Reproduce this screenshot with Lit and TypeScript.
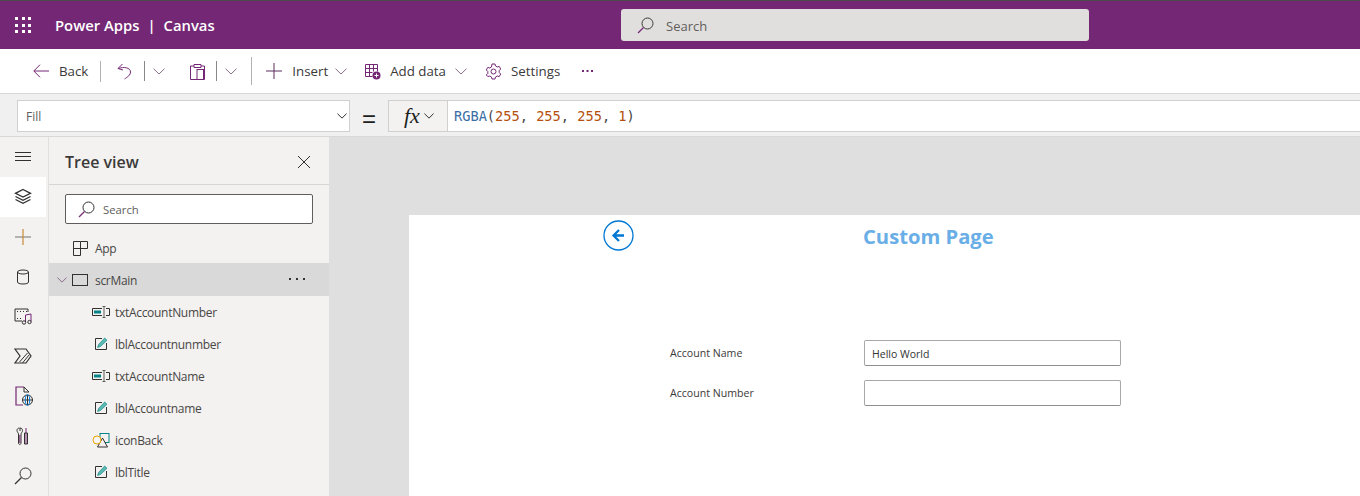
import { LitElement, html, css, svg } from "lit";
import { customElement } from "lit/decorators.js";

const P = "#742774";
const INK = "#323130";
const TEAL = "#038387";

const chevron = (cls = "") => html`<svg class="chev ${cls}" viewBox="0 0 12 7" preserveAspectRatio="none"><path d="M.5.7 6 6 11.500.7" fill="none" stroke="currentColor" vector-effect="non-scaling-stroke"/></svg>`;
const lens = (c = INK) => html`<svg width="17" height="17" viewBox="0 0 17 17" fill="none"><circle cx="10.500" cy="6.500" r="5.500" stroke=${c}/><path d="M6.500 10.500 1 16" stroke=${P} stroke-width="1.200"/></svg>`;
const dots = (cls: string, fill: string, w: number) => html`<svg class=${cls} width=${w} height="2" viewBox="0 0 ${w} 2" fill=${fill}><rect width="2" height="2"/><rect x=${(w - 2) / 2} width="2" height="2"/><rect x=${w - 2} width="2" height="2"/></svg>`;

const railIcons = [
  svg`<path d="M11 3.500l7.500 3.800-7.500 3.800-7.500-3.800z M3.500 10.500l7.500 3.800 7.500-3.800 M3.500 13.500l7.500 3.800 7.500-3.800" fill="none" stroke="${INK}" stroke-width="1.300"/>`,
  svg`<path d="M3 11h16" stroke="#8a8886" stroke-width="1.200"/><path d="M11 3v16" stroke="#c98a3a" stroke-width="1.200"/>`,
  svg`<ellipse cx="11" cy="6" rx="5.500" ry="2" fill="none" stroke="${INK}"/><path d="M5.500 6v10c0 1.300 2.500 2 5.500 2s5.500-.7 5.500-2V6" fill="none" stroke="${INK}"/>`,
  svg`<path d="M16 6V3H3v12h7" fill="none" stroke="${INK}"/><path d="M5 5.500h1M8 5.500h1M11 5.500h1M14 5.500h1M5 12.500h1M8 12.500h1" stroke="${INK}"/><path d="M13.500 16V9l5.500-1v7.500" fill="none" stroke="${P}"/><circle cx="12" cy="16.500" r="1.700" fill="none" stroke="${INK}"/><circle cx="17.500" cy="16" r="1.700" fill="none" stroke="${INK}"/>`,
  svg`<path d="M3 4h11l5 7-5 7H3l5-7z" fill="none" stroke="${INK}" stroke-width="1.200"/><path d="M7.500 17l8-9M10.500 18l6.500-8" stroke="${INK}"/>`,
  svg`<path d="M12 2H4v18h7" fill="none" stroke="${P}" stroke-width="1.200"/><path d="M12 2l5 5h-5z" fill="none" stroke="${INK}"/><circle cx="15.500" cy="15" r="5" fill="none" stroke="${INK}"/><path d="M10.500 15h10M15.500 10v10" stroke="${INK}"/><ellipse cx="15.500" cy="15" rx="2.200" ry="5" fill="none" stroke="#0078d4"/>`,
  svg`<path d="M7.500 3C6 3 5 4 5 5.500S6.500 8 6.500 9v9c0 .8.500 1.500 1.300 1.500S9 18.800 9 18V9c0-1 1.500-2 1.500-3.500S9.500 3 8 3v3" fill="none" stroke="${INK}"/><path d="M7.800 10v8" stroke="${P}"/><path d="M14 3v16" stroke="${P}"/><path d="M12.500 8h3v11h-3z" fill="none" stroke="${INK}"/>`,
  svg`<circle cx="13.500" cy="8.500" r="5.500" fill="none" stroke="${INK}"/><path d="M9.500 12.500 3 19" stroke="${INK}" stroke-width="1.200"/>`,
];

const labelIcon = html`<svg width="14" height="14" viewBox="0 0 14 14" fill="none"><path d="M8 1.500H1.500v11h11V6" stroke=${INK}/><path d="M3.500 10.500l1-3L10.700 1l2.300 2.300L6.500 9.500z" fill="#5fb8b0" stroke=${TEAL} stroke-width=".6"/></svg>`;
const inputIcon = html`<svg width="18" height="12" viewBox="0 0 18 12" fill="none"><path d="M10 2.500H.5v7H10M14 2.500h3.500v7H14" stroke=${INK}/><rect x="2" y="4.500" width="7" height="3" fill=${TEAL}/><path d="M10.500.5h3M12 .5v11M10.500 11.500h3" stroke="#605e5c"/></svg>`;
const shapeIcon = html`<svg width="18" height="15" viewBox="0 0 18 15" fill="none"><rect x="8" y=".5" width="9" height="9" stroke=${TEAL}/><path d="M10.500 5 5.500 14h10z" fill="#f3f2f1" stroke=${INK}/><circle cx="5" cy="7" r="4" fill="#f8f6f2" stroke="#eaa300"/></svg>`;

@customElement("app-root")
export class AppRoot extends LitElement {
  static styles = css`
    :host { display: block; width: 1360px; height: 496px; overflow: hidden; font-family: "Open Sans", "Noto Sans", sans-serif; color: #323130; font-size: 13.3px; }
    * { box-sizing: border-box; }
    svg { display: block; flex: none; }
    .header { height: 49px; background: #742774; border-top: 1px solid #4a4a4a; display: grid; grid-template-columns: 621px 468px; align-items: center; }
    .brand { display: flex; align-items: center; color: #fff; font-weight: 600; font-size: 14.8px; padding-left: 15px; }
    .waffle { display: grid; grid-template-columns: repeat(3, 3px); gap: 3.5px; margin-right: 24px; }
    .waffle i { width: 3px; height: 3px; background: #fff; }
    .brand b { font-weight: 600; margin: 0 8px; }
    .global-search { height: 32px; background: #e1dfdd; border-radius: 3px; display: flex; align-items: center; gap: 12px; padding: 1px 0 0 16px; color: #605e5c; font-size: 13px; }

    .toolbar { height: 45px; background: #fff; border-bottom: 1px solid #d8d8d8; display: flex; align-items: center; padding-left: 33px; }
    .tool { display: flex; align-items: center; color: #3b3a39; }
    .back { gap: 10px; }
    .insert { gap: 10px; margin-left: 14px; }
    .add { gap: 9px; margin-left: 17px; }
    .settings { gap: 9px; margin-left: 18px; }
    .chev { width: 12px; height: 7px; color: #8a6f8a; }
    .chev.dark { width: 10px; height: 6px; color: #323130; }
    .chev.small { width: 10px; height: 6px; }
    .sep { width: 1px; background: #8a8886; height: 20px; }
    .sep.light { background: #b3b0ad; height: 21px; margin: 0 16px 0 12px; }
    .sep.after-undo { margin: 0 8px 0 12px; }
    .sep.after-paste { margin: 0 8px 0 11px; }
    .sep.tall { background: #b3b0ad; height: 28px; margin-left: 14px; }
    .paste { margin-left: 25px; }
    .chev.insert-chev { margin-left: 7px; }
    .chev.add-chev { margin-left: 9px; }
    .more-tools { margin-left: 22px; }

    .formula { height: 43px; background: #f0f0f0; display: flex; align-items: center; padding: 2px 0 0 17px; border-bottom: 1px solid #d8d8d8; }
    .prop { width: 333px; height: 32px; background: #fff; border: 1px solid #d2d0ce; display: flex; align-items: center; justify-content: space-between; padding: 0 2px 0 8px; color: #605e5c; font-size: 12px; }
    .eq { width: 38px; text-align: center; font-size: 24px; line-height: 24px; color: #201f1e; padding-top: 5px; font-family: "Liberation Sans", sans-serif; }
    .fx { width: 60px; height: 32px; border: 1px solid #d2d0ce; background: #f3f2f1; display: flex; align-items: center; gap: 4px; padding-left: 15px; }
    .fx em { font-family: "Liberation Serif", serif; font-size: 22px; line-height: 24px; color: #201f1e; }
    .code { flex: 1; height: 32px; background: #fff; border: 1px solid #d2d0ce; border-left: none; border-right: none; display: flex; align-items: center; padding-left: 6px; font-family: "DejaVu Sans Mono", monospace; font-size: 13.65px; white-space: pre; color: #444; }
    .code .f { color: #3a6ea5; }
    .code .n { color: #b4500f; }

    .main { height: 359px; display: flex; }
    .rail { width: 49px; background: #f3f2f1; border-right: 1px solid #e1dfdd; display: flex; flex-direction: column; }
    .rail div { height: 40px; display: flex; align-items: center; justify-content: center; padding-right: 2px; }
    .rail .on { background: #fff; margin-right: 2px; padding-right: 0; }
    .panel { width: 280px; background: #f3f2f1; flex: none; }
    .panel-head { height: 48px; border-bottom: 1px solid #d8d6d4; display: flex; align-items: center; justify-content: space-between; padding: 2px 18px 0 16px; font-size: 16px; font-weight: 600; color: #3b3a39; }
    .tree-search { margin: 9px 16px 0; height: 30px; background: #fff; border: 1px solid #605e5c; border-radius: 2px; display: flex; align-items: center; gap: 8px; padding-left: 12px; font-size: 11.3px; color: #605e5c; }
    .rows { padding-top: 6px; }
    .row { height: 32px; display: flex; align-items: center; font-size: 12px; letter-spacing: -.3px; color: #484644; }
    .row .ic { width: 20px; display: flex; justify-content: center; margin-right: 4px; }
    .row.app { padding: 4px 0 0 21px; height: 33px; }
    .row.app .ic { margin-right: 5px; }
    .row.screen { background: #d9d9d9; padding: 1px 0 0 8px; height: 33px; }
    .row.screen .ic { margin: 0 5px 0 3px; }
    .row.child { padding-left: 42px; }
    .more { margin: 0 24px 3px auto; }

    .stage { flex: 1; background: #dfdfdf; padding: 78px 0 0 80px; }
    .page { height: 100%; background: #fff; display: grid; grid-template-columns: 194px 257px; grid-template-rows: 125px 26px 14px 26px; align-content: start; padding-left: 261px; }
    .top { grid-column: 1 / 3; display: flex; align-items: flex-start; padding-top: 5px; }
    .back-btn { margin-left: -67px; }
    .title { margin: -1px 0 0 229px; color: #69aee6; font-size: 20.2px; font-weight: 700; line-height: 34px; }
    .field { font-size: 10.6px; color: #3b3a39; padding-top: 6px; }
    .input { border: 1px solid #a8a8a8; border-bottom-color: #8f8f8f; border-radius: 2px; font-size: 10.5px; display: flex; align-items: center; padding: 1px 0 0 7px; color: #333; }
    .gap { grid-column: 1 / 3; }
  `;

  render() {
    const children = [
      ["txtAccountNumber", inputIcon],
      ["lblAccountnunmber", labelIcon],
      ["txtAccountName", inputIcon],
      ["lblAccountname", labelIcon],
      ["iconBack", shapeIcon],
      ["lblTitle", labelIcon],
    ] as const;
    return html`
      <div class="header">
        <div class="brand">
          <span class="waffle">${Array.from({ length: 9 }, () => html`<i></i>`)}</span>
          Power Apps<b>|</b>Canvas
        </div>
        <div class="global-search">${lens("#3b3a39")}<span>Search</span></div>
      </div>
      <div class="toolbar">
        <div class="tool back">
          <svg width="16" height="14" viewBox="0 0 16 14" fill="none" stroke=${P}><path d="M7 .7.8 7 7 13.300M1 7h15"/></svg>
          Back
        </div>
        <span class="sep light"></span>
        <svg width="15" height="17" viewBox="0 0 15 17" fill="none" stroke=${P}><path d="M5.500 1 1 5.500 6 7M1.500 5.500c5-2 12-1 12 3.500 0 3-3 5-6 7"/></svg>
        <span class="sep after-undo"></span>
        ${chevron()}
        <svg class="paste" width="15" height="17" viewBox="0 0 15 17" fill="none" stroke=${P}><path d="M4 3H.5v13.500h14V3H11"/><path d="M4 4.500V1.500h7v3z"/><rect x="7" y="6.500" width="6.500" height="10"/></svg>
        <span class="sep after-paste"></span>
        ${chevron()}
        <span class="sep tall"></span>
        <div class="tool insert">
          <svg width="16" height="16" viewBox="0 0 16 16" stroke="#5c2e5c"><path d="M8 0v16M0 8h16"/></svg>
          Insert
        </div>
        ${chevron("insert-chev")}
        <div class="tool add">
          <svg width="17" height="17" viewBox="0 0 17 17" fill="none" stroke=${P}><path d="M1.500 1.500h12v7M1.500 1.500v12h7M1.500 5.500h12M5.500 1.500v12M9.500 1.500v7M1.500 9.500h7"/><circle cx="12.500" cy="12.500" r="4" fill=${P} stroke="none"/><path d="M12.500 10.500v4M10.500 12.500h4" stroke="#fff"/></svg>
          Add data
        </div>
        ${chevron("add-chev")}
        <div class="tool settings">
          <svg width="17" height="17" viewBox="0 0 17 17" fill="none" stroke=${P}><path d="M7 1h3l.5 2 1.700 1 2-.6 1.500 2.600-1.500 1.500v2l1.500 1.500-1.500 2.600-2-.6-1.700 1-.5 2H7l-.5-2-1.700-1-2 .6L1.300 12l1.500-1.500v-2L1.300 7l1.500-2.600 2 .6 1.700-1z"/><circle cx="8.500" cy="8.500" r="2.500"/></svg>
          Settings
        </div>
        ${dots("more-tools", P, 11)}
      </div>
      <div class="formula">
        <div class="prop"><span>Fill</span>${chevron("dark")}</div>
        <div class="eq">=</div>
        <div class="fx"><em>fx</em>${chevron("dark")}</div>
        <div class="code"><span class="f">RGBA</span>(<span class="n">255</span>, <span class="n">255</span>, <span class="n">255</span>, <span class="n">1</span>)</div>
      </div>
      <div class="main">
        <div class="rail">
          <div><svg width="16" height="9" viewBox="0 0 16 9" stroke=${INK}><path d="M0 .5h16M0 4.500h16M0 8.500h16"/></svg></div>
          ${railIcons.map((p, i) => html`<div class=${i === 0 ? "on" : ""}><svg width="22" height="22" viewBox="0 0 22 22">${p}</svg></div>`)}
        </div>
        <div class="panel">
          <div class="panel-head">Tree view
            <svg width="14" height="14" viewBox="0 0 14 14" stroke=${INK}><path d="M1 1l12 12M13 1 1 13"/></svg>
          </div>
          <div class="tree-search">${lens()}<span>Search</span></div>
          <div class="rows">
            <div class="row app"><span class="ic"><svg width="15" height="15" viewBox="0 0 15 15" fill="none" stroke=${INK}><path d="M.5.500h7v14h-7zM.5 7.500h7M7.500.500h7v7h-7"/></svg></span>App</div>
            <div class="row screen">
              ${chevron("small")}
              <span class="ic"><svg width="16" height="12" viewBox="0 0 16 12" fill="none" stroke=${INK}><rect x=".5" y=".5" width="15" height="11"/></svg></span>scrMain
              ${dots("more", INK, 16)}
            </div>
            ${children.map(([name, icon]) => html`<div class="row child"><span class="ic">${icon}</span>${name}</div>`)}
          </div>
        </div>
        <div class="stage">
          <div class="page">
            <div class="top">
              <svg class="back-btn" width="31" height="31" viewBox="0 0 31 31" fill="none" stroke="#0078d4"><circle cx="15.500" cy="15.500" r="14.500" stroke-width="1.300"/><path d="M16 10l-5.500 5.500L16 21M11 15.500h10" stroke-width="2.300"/></svg>
              <span class="title">Custom Page</span>
            </div>
            <div class="field">Account Name</div>
            <div class="input">Hello World</div>
            <div class="gap"></div>
            <div class="field">Account Number</div>
            <div class="input"></div>
          </div>
        </div>
      </div>
    `;
  }
}
